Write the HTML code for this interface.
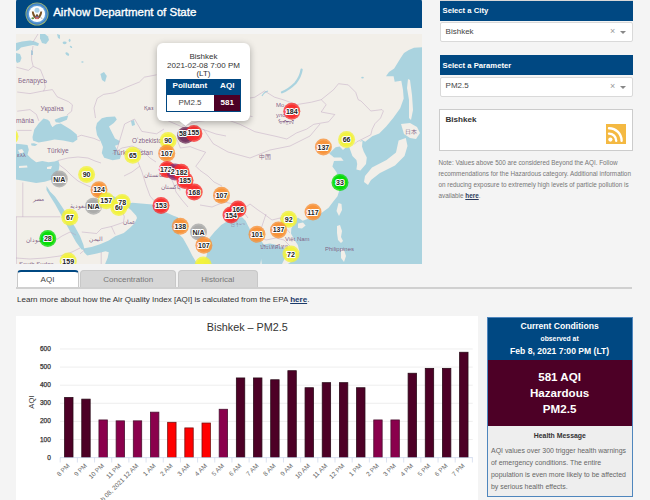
<!DOCTYPE html>
<html><head><meta charset="utf-8">
<style>
*{margin:0;padding:0;box-sizing:border-box}
html,body{width:650px;height:500px;overflow:hidden;background:#f4f4f4;font-family:"Liberation Sans",sans-serif;color:#333}
.abs{position:absolute}
.t{position:absolute;line-height:0;white-space:nowrap}
.p{position:absolute}
.mt{font-size:7px;font-weight:bold;text-anchor:middle;fill:#222;stroke:#fff;stroke-width:2.2px;paint-order:stroke;stroke-linejoin:round}
.sel{left:439.5px;width:193px;height:20px;background:#fff;border:1px solid #d9d9d9;border-radius:2px}
.tab{top:270px;height:18px;border:1px solid #c8c8c8;border-bottom:none;border-radius:4px 4px 0 0;background:#d6d6d6}
.yl{font-size:6.5px;fill:#333;stroke:#333;stroke-width:0.25px}
.xl{font-size:6.4px;fill:#666}
</style></head><body>
<div class="abs" style="left:16px;top:-1.5px;width:406px;height:29.5px;background:#004882;border-radius:3px 3px 0 0"></div>
<svg class="abs" style="left:24.8px;top:2px" width="24" height="24" viewBox="0 0 24 24">
  <circle cx="12" cy="12" r="11.5" fill="#a4b96e"/>
  <circle cx="12" cy="12" r="10.7" fill="#3f7fc4"/>
  <circle cx="12" cy="12" r="9.6" fill="#5a9ad6"/>
  <circle cx="12" cy="12" r="8.1" fill="#fdfdfd"/>
  <circle cx="12" cy="8.2" r="2.5" fill="#a9d0ea"/>
  <path d="M6.8,9.6 C7.2,13 8.2,15.6 11,17.2 L11.6,15.2 C10,13.6 9,11.6 8.6,9.6Z" fill="#7a5226"/>
  <path d="M17.2,9.6 C16.8,13 15.8,15.6 13,17.2 L12.4,15.2 C14,13.6 15,11.6 15.4,9.6Z" fill="#7a5226"/>
  <circle cx="12" cy="13.3" r="1.1" fill="#6b4a22"/>
  <path d="M10.4,14.3 h3.2 v2.2 q-1.6,1.6 -3.2,0z" fill="#d9676d"/>
  <rect x="10.4" y="14.3" width="3.2" height="0.9" fill="#3a5591"/>
  <ellipse cx="7.8" cy="16.2" rx="1.4" ry="1.0" fill="#5f9048"/>
  <path d="M15.4,15.2 l2,1.6" stroke="#8a8a7a" stroke-width="0.7"/>
 </svg>
<div class="t" style="left:53.20px;top:11.52px;font-size:11.5px;font-weight:normal;color:#fff;-webkit-text-stroke:0.35px #fff">AirNow Department of State</div>
<div class="abs" style="left:16px;top:34px;width:406px;height:230px;overflow:hidden;background:#f2efe9">
 <svg width="406" height="230" viewBox="16 34 406 230" style="position:absolute;left:0;top:0;font-family:'Liberation Sans',sans-serif">
<polygon fill="#aad3df" points="16.0,43.0 22.0,41.5 30.0,40.5 35.0,41.5 39.0,43.5 38.0,46.0 33.0,45.0 28.0,46.0 21.0,47.5 18.5,50.0 16.0,51.0"/>
<polygon fill="#aad3df" points="16.0,53.0 20.0,54.0 21.5,58.0 20.0,62.0 17.0,63.0 16.0,61.0"/>
<polygon fill="#aad3df" points="40.0,34.0 45.0,34.0 48.0,36.5 49.0,40.0 46.0,44.0 42.0,43.0 40.0,38.5"/>
<polygon fill="#aad3df" points="57.0,34.0 60.0,35.0 60.0,39.0 58.0,38.0"/>
<polygon fill="#aad3df" points="31.0,50.0 33.0,51.0 33.0,55.0 31.0,55.0"/>
<polygon fill="#aad3df" points="100.4,74.0 104.0,72.0 106.8,76.0 105.0,82.0 102.0,80.0"/>
<ellipse cx="64.6" cy="42.8" rx="2" ry="1.4" fill="#aad3df"/>
<ellipse cx="67.3" cy="54" rx="2.2" ry="1.3" transform="rotate(40 67.3 54)" fill="#aad3df"/>
<ellipse cx="69.6" cy="40.3" rx="0.9" ry="1.6" fill="#aad3df"/>
<ellipse cx="71" cy="46.8" rx="1.4" ry="0.8" transform="rotate(40 71 46.8)" fill="#aad3df"/>
<ellipse cx="82.4" cy="62" rx="1.2" ry="0.8" fill="#aad3df"/>
<polygon fill="#aad3df" points="32.5,136.9 34.3,129.5 38.6,123.4 43.5,118.5 47.8,119.7 50.9,122.8 52.2,127.0 55.8,124.6 60.8,123.4 64.5,125.8 70.6,129.5 76.8,134.5 77.4,139.4 73.0,142.5 63.2,140.6 54.6,139.4 46.0,141.2 38.6,142.5 33.0,140.6"/>
<polygon fill="#aad3df" points="54.6,119.7 60.8,117.2 68.2,115.4 66.9,119.7 59.5,122.8 55.8,122.2"/>
<polygon fill="#aad3df" points="31.0,143.5 34.0,143.2 37.5,144.5 35.0,146.0 31.5,145.5"/>
<polygon fill="#aad3df" points="106.6,117.0 115.0,116.4 116.8,119.4 113.8,123.0 109.0,126.6 110.2,129.0 112.6,133.8 115.0,138.6 119.8,141.0 118.6,144.6 115.0,145.8 117.4,150.6 121.0,155.4 119.8,159.0 112.6,160.2 104.2,157.8 101.8,153.0 103.0,147.0 100.6,141.0 97.0,135.0 95.8,127.8 97.0,123.0 101.8,118.2"/>
<polygon fill="#aad3df" points="131.0,121.0 134.0,120.0 135.0,125.0 132.0,126.0"/>
<polygon fill="#aad3df" points="16.0,143.7 21.4,144.3 27.5,144.9 28.8,149.8 27.5,154.8 31.2,158.5 36.2,162.2 42.3,160.9 48.5,162.2 54.6,161.5 58.3,160.3 59.5,164.6 58.9,169.5 55.8,175.7 52.2,179.4 44.8,181.8 36.2,183.1 26.3,181.2 16.0,179.4"/>
<polygon fill="#aad3df" points="46.5,186.0 48.5,189.0 50.0,191.5 55.0,196.5 61.5,206.0 68.5,217.0 75.0,227.0 80.0,236.0 83.5,245.0 84.5,250.0 81.5,249.5 76.0,242.0 71.0,233.0 65.5,223.0 60.0,213.0 55.0,204.0 50.0,196.0 46.5,190.0"/>
<polygon fill="#aad3df" points="93.0,188.0 99.0,190.0 107.0,193.0 115.0,197.0 122.0,200.0 127.0,203.0 125.0,207.0 118.0,205.5 110.0,203.0 102.0,200.0 96.0,194.0"/>
<polygon fill="#aad3df" points="83.0,248.5 91.5,247.0 100.0,244.2 108.8,240.5 115.2,236.2 123.8,233.0 130.3,227.5 134.6,223.2 137.0,218.0 136.2,215.8 131.0,210.0 126.0,206.0 128.0,203.5 132.4,202.8 141.0,203.6 152.4,204.4 162.0,211.0 168.6,213.4 173.5,215.8 178.3,217.4 177.5,223.9 179.0,234.3 183.0,238.3 188.2,247.6 192.2,255.5 196.1,262.0 198.0,266.0 104.5,266.0 105.5,263.0 107.7,257.7 108.8,252.3 105.5,251.2 96.9,253.4 87.2,255.5 84.0,252.3"/>
<polygon fill="#aad3df" points="203.0,266.0 204.0,262.0 206.7,255.5 209.3,238.3 214.6,231.7 221.2,225.0 227.8,221.0 233.0,218.5 239.7,217.2 242.4,217.6 245.6,220.8 247.8,225.2 250.0,229.5 253.0,231.6 259.6,238.0 264.0,245.0 264.8,249.8 263.2,254.7 261.0,260.0 260.0,266.0"/>
<polygon fill="#aad3df" points="264.0,244.5 270.0,243.6 276.7,244.9 283.3,247.5 287.0,252.0 285.0,258.0 281.0,266.0 262.0,266.0 261.0,258.0"/>
<polygon fill="#aad3df" points="284.9,266.0 289.7,262.8 296.2,257.9 299.4,251.4 297.8,245.0 294.6,240.1 291.0,233.6 291.3,228.8 294.6,222.3 297.8,217.4 302.7,220.7 307.6,219.0 315.7,217.4 322.1,212.6 328.6,207.7 333.5,201.2 337.5,196.3 340.0,188.2 339.0,180.0 338.0,176.0 336.4,172.0 332.4,166.4 334.0,161.0 343.6,160.8 341.0,157.6 334.0,157.6 329.2,153.6 335.6,147.2 339.6,146.4 343.0,150.0 345.2,148.0 348.4,147.2 352.4,146.0 358.0,143.0 362.0,140.0 365.2,141.8 372.2,136.2 379.2,133.4 386.2,126.4 393.2,118.0 400.2,108.2 403.7,98.4 403.0,90.0 401.3,80.7 394.7,81.8 393.6,76.3 386.0,76.3 389.0,72.0 394.2,68.4 400.8,57.8 404.0,53.0 408.8,49.9 414.0,47.8 422.0,47.2 422.0,266.0"/>
<polygon fill="#f2efe9" points="349.0,146.5 352.4,156.0 356.4,160.0 357.2,164.0 356.4,169.6 360.4,170.4 366.0,164.0 366.8,157.6 363.6,151.2 362.0,146.4 362.5,141.0 356.0,142.5 350.0,144.0"/>
<polygon fill="#f2efe9" points="398.6,140.6 405.8,138.0 407.5,146.0 404.5,156.0 395.0,165.5 380.0,173.0 371.0,180.0 368.0,185.0 364.0,182.0 365.0,176.0 372.0,167.5 386.5,160.0 396.0,152.6"/>
<polygon fill="#f2efe9" points="401.0,124.0 410.0,123.0 417.0,127.0 420.0,133.0 416.0,139.0 410.0,138.0 404.0,134.0"/>
<polygon fill="#f2efe9" points="408.0,79.0 410.0,80.0 412.0,95.0 413.0,110.0 411.0,120.0 409.0,118.0 409.0,100.0 407.0,88.0"/>
<polygon fill="#f2efe9" points="338.5,203.0 341.5,204.0 342.0,210.0 339.0,216.0 336.5,211.0"/>
<polygon fill="#f2efe9" points="298.0,223.5 303.0,222.5 305.6,225.5 302.0,228.5 298.0,228.0"/>
<polygon fill="#f2efe9" points="337.0,226.0 340.0,225.0 342.0,231.0 341.0,237.0 343.0,241.0 341.0,243.0 338.0,240.0 337.0,233.0"/>
<polygon fill="#f2efe9" points="341.0,249.0 344.0,250.0 346.0,256.0 344.0,262.0 341.0,258.0"/>
<polygon fill="#f2efe9" points="19.0,166.0 27.0,165.5 27.5,167.5 19.0,168.0"/>
<polygon fill="#f2efe9" points="47.0,167.0 52.0,166.0 51.0,169.0 47.0,169.0"/>
<polygon fill="#f2efe9" points="50.0,122.0 54.0,121.0 56.0,124.0 52.5,127.0 50.5,124.0"/>
<polygon fill="#f2efe9" points="18.0,150.0 22.0,149.0 24.0,152.0 20.0,154.0"/>
<path d="M301.6,69.7 Q300.5,77 295.5,83 Q289,89.5 282,92.3" stroke="#aad3df" stroke-width="2.3" fill="none" stroke-linecap="round"/>
<ellipse cx="362.5" cy="77.6" rx="1.3" ry="0.9" fill="#aad3df"/>
<path d="M262,96 Q264,92 268,91" stroke="#aad3df" stroke-width="1.2" fill="none"/>
<polyline fill="none" stroke="#b89bbb" stroke-width="0.7" stroke-opacity="0.6" points="38.0,34.0 33.0,42.0"/>
<polyline fill="none" stroke="#b89bbb" stroke-width="0.7" stroke-opacity="0.6" points="33.0,46.0 31.6,55.0 31.6,60.0 33.2,66.4"/>
<polyline fill="none" stroke="#b89bbb" stroke-width="0.7" stroke-opacity="0.6" points="16.4,67.2 28.4,70.4 33.2,66.4 40.4,69.6 43.6,77.6 45.2,87.2 43.6,91.2"/>
<polyline fill="none" stroke="#b89bbb" stroke-width="0.7" stroke-opacity="0.6" points="17.2,92.0 30.0,93.6 42.0,91.2 52.4,89.6 57.2,96.8 68.4,101.6 72.4,104.8 71.6,111.2 66.8,115.2"/>
<polyline fill="none" stroke="#b89bbb" stroke-width="0.7" stroke-opacity="0.6" points="17.2,111.2 30.0,109.6 36.4,114.4 38.8,120.8"/>
<polyline fill="none" stroke="#b89bbb" stroke-width="0.7" stroke-opacity="0.6" points="17.2,130.4 31.6,130.4"/>
<polyline fill="none" stroke="#b89bbb" stroke-width="0.7" stroke-opacity="0.6" points="94.0,108.0 97.2,98.4 103.6,94.4 114.0,92.8 127.0,87.0 139.4,82.0 144.3,77.2 156.6,74.8"/>
<polyline fill="none" stroke="#b89bbb" stroke-width="0.7" stroke-opacity="0.6" points="94.0,108.0 95.5,118.0"/>
<polyline fill="none" stroke="#b89bbb" stroke-width="0.7" stroke-opacity="0.6" points="77.0,137.0 81.2,135.2 94.0,138.4 100.0,141.0"/>
<polyline fill="none" stroke="#b89bbb" stroke-width="0.7" stroke-opacity="0.6" points="58.0,160.5 68.0,158.0 78.0,157.0 88.0,158.0 95.0,161.0 101.0,163.0"/>
<polyline fill="none" stroke="#b89bbb" stroke-width="0.7" stroke-opacity="0.6" points="59.5,165.0 66.0,170.0 72.0,176.0 78.0,181.0 86.0,185.0 93.0,188.0"/>
<polyline fill="none" stroke="#b89bbb" stroke-width="0.7" stroke-opacity="0.6" points="22.8,182.5 22.8,216.8"/>
<polyline fill="none" stroke="#b89bbb" stroke-width="0.7" stroke-opacity="0.6" points="16.0,216.8 40.0,216.8 60.4,216.8"/>
<polyline fill="none" stroke="#b89bbb" stroke-width="0.7" stroke-opacity="0.6" points="16.3,216.8 16.3,266.0"/>
<polyline fill="none" stroke="#b89bbb" stroke-width="0.7" stroke-opacity="0.6" points="16.0,258.0 30.0,259.0 45.0,258.0 60.0,256.0 72.0,252.0 80.0,248.0"/>
<polyline fill="none" stroke="#b89bbb" stroke-width="0.7" stroke-opacity="0.6" points="50.0,246.0 56.0,240.0 62.0,236.0 70.0,232.0 76.0,235.0"/>
<polyline fill="none" stroke="#b89bbb" stroke-width="0.7" stroke-opacity="0.6" points="81.8,232.0 96.6,233.5 101.2,228.8 111.4,226.5 123.4,222.4 124.3,216.8 122.0,210.0"/>
<polyline fill="none" stroke="#b89bbb" stroke-width="0.7" stroke-opacity="0.6" points="111.4,226.5 115.1,234.4"/>
<polyline fill="none" stroke="#b89bbb" stroke-width="0.7" stroke-opacity="0.6" points="101.2,252.0 101.2,266.0"/>
<polyline fill="none" stroke="#b89bbb" stroke-width="0.7" stroke-opacity="0.6" points="80.0,253.8 84.6,250.0"/>
<polyline fill="none" stroke="#b89bbb" stroke-width="0.7" stroke-opacity="0.6" points="116.5,151.0 124.6,124.0 134.5,119.0 141.8,131.4 156.6,133.8 164.0,129.0"/>
<polyline fill="none" stroke="#b89bbb" stroke-width="0.7" stroke-opacity="0.6" points="164.0,119.0 181.2,126.5 198.5,121.5 215.7,119.0 237.8,114.0 252.6,116.6"/>
<polyline fill="none" stroke="#b89bbb" stroke-width="0.7" stroke-opacity="0.6" points="112.0,154.0 122.0,148.0 132.0,146.0 142.0,150.0 150.0,158.0 156.0,162.0"/>
<polyline fill="none" stroke="#b89bbb" stroke-width="0.7" stroke-opacity="0.6" points="138.0,162.0 142.0,172.0 146.0,185.0 150.0,196.0 156.0,203.0"/>
<polyline fill="none" stroke="#b89bbb" stroke-width="0.7" stroke-opacity="0.6" points="124.0,176.0 132.0,172.0 140.0,166.0"/>
<polyline fill="none" stroke="#b89bbb" stroke-width="0.7" stroke-opacity="0.6" points="170.0,175.0 174.0,185.0 176.0,192.0 182.0,200.0 188.0,207.0"/>
<polyline fill="none" stroke="#b89bbb" stroke-width="0.7" stroke-opacity="0.6" points="174.8,135.4 178.0,142.0 180.4,148.0 190.2,146.6 197.2,149.4 205.6,152.2 200.0,160.6 195.8,166.2 200.0,170.4 208.0,176.0 214.0,182.0 222.0,186.0"/>
<polyline fill="none" stroke="#b89bbb" stroke-width="0.7" stroke-opacity="0.6" points="200.0,128.4 208.0,131.2 216.0,134.0 226.0,136.0"/>
<polyline fill="none" stroke="#b89bbb" stroke-width="0.7" stroke-opacity="0.6" points="203.4,129.0 213.2,143.7 228.0,152.0 250.0,158.0 270.0,150.0 290.0,146.0 310.0,136.0 320.0,124.0"/>
<polyline fill="none" stroke="#b89bbb" stroke-width="0.7" stroke-opacity="0.6" points="225.0,112.0 240.0,99.7 254.8,97.2 264.6,91.0 274.5,97.2 283.0,99.7 296.6,104.6 311.4,102.2 321.2,99.7 326.2,104.6 321.2,112.0 334.8,114.5 328.6,121.8 313.8,124.3 306.5,129.2 296.6,132.9 286.8,139.0 277.0,136.6 254.8,131.7 240.0,124.3 228.0,120.0"/>
<polyline fill="none" stroke="#b89bbb" stroke-width="0.7" stroke-opacity="0.6" points="321.2,99.7 333.5,89.8 338.5,83.7 348.3,84.9 355.7,92.3 358.2,99.7 361.0,101.0 370.8,111.0 382.0,109.6 383.4,111.0 380.6,118.0 375.0,123.6 372.2,129.2 370.8,134.8 362.4,139.0 356.8,141.8 354.0,144.6"/>
<polyline fill="none" stroke="#b89bbb" stroke-width="0.7" stroke-opacity="0.6" points="200.0,205.0 212.0,207.0 224.0,202.0 234.0,204.0 242.0,210.0 248.0,218.0"/>
<polyline fill="none" stroke="#b89bbb" stroke-width="0.7" stroke-opacity="0.6" points="242.0,210.0 250.0,204.0 258.0,210.0 264.0,214.0 272.0,220.0 280.0,218.0 290.0,216.0"/>
<polyline fill="none" stroke="#b89bbb" stroke-width="0.7" stroke-opacity="0.6" points="258.0,236.0 266.0,240.0 276.0,238.0 284.0,240.0 290.0,246.0"/>
<polyline fill="none" stroke="#b89bbb" stroke-width="0.7" stroke-opacity="0.6" points="266.0,214.0 262.0,226.0 258.0,236.0"/>
<polyline fill="none" stroke="#b89bbb" stroke-width="0.7" stroke-opacity="0.6" points="280.0,218.0 284.0,226.0 290.0,233.0"/>
<text x="18" y="83" font-size="6.6" fill="#7d5a82" fill-opacity="0.95">Беларусь</text>
<text x="40.5" y="111" font-size="6.6" fill="#7d5a82" fill-opacity="0.95">Україна</text>
<text x="16" y="122.5" font-size="6.6" fill="#7d5a82" fill-opacity="0.95">mânia</text>
<text x="47" y="153" font-size="6.6" fill="#7d5a82" fill-opacity="0.95">Türkiye</text>
<text x="17" y="156.5" font-size="6" fill="#7d5a82" fill-opacity="0.95">ελλ</text>
<text x="132" y="143" font-size="6.4" fill="#7d5a82" fill-opacity="0.95">Oʻzbekiston</text>
<text x="113" y="154.5" font-size="6.6" fill="#7d5a82" fill-opacity="0.95">Türkmenistan</text>
<text x="144" y="109.5" font-size="6" fill="#7d5a82" fill-opacity="0.95">Қаз</text>
<text x="144" y="177" font-size="5.5" fill="#7d5a82" fill-opacity="0.95">افغانستان</text>
<text x="161" y="188.5" font-size="5.5" fill="#7d5a82" fill-opacity="0.95">پاکستان</text>
<text x="32.5" y="201" font-size="5.8" fill="#7d5a82" fill-opacity="0.95">مصر</text>
<text x="70" y="208" font-size="5.8" fill="#7d5a82" fill-opacity="0.95">السعودية</text>
<text x="89" y="241" font-size="6" fill="#7d5a82" fill-opacity="0.95">اليمن</text>
<text x="123" y="224" font-size="6" fill="#7d5a82" fill-opacity="0.95">عمان</text>
<text x="26" y="241.5" font-size="5.8" fill="#7d5a82" fill-opacity="0.95">السودان</text>
<text x="19" y="265.5" font-size="6" fill="#7d5a82" fill-opacity="0.95">South Sudan</text>
<text x="276" y="107" font-size="6" fill="#7d5a82" fill-opacity="0.95">Mo</text>
<text x="276" y="117" font-size="6" fill="#7d5a82" fill-opacity="0.95">улс</text>
<text x="278" y="124" font-size="4.5" fill="#7d5a82" fill-opacity="0.95">ᠮᠣᠩᠭᠣᠯ</text>
<text x="259" y="159" font-size="6" fill="#7d5a82" fill-opacity="0.95">中国</text>
<text x="285" y="240.5" font-size="6" fill="#7d5a82" fill-opacity="0.95">Việt Nam</text>
<text x="260" y="249" font-size="5.5" fill="#7d5a82" fill-opacity="0.95">ประเทศไทย</text>
<text x="325" y="251" font-size="6" fill="#7d5a82" fill-opacity="0.95">Philippines</text>
<text x="405" y="134" font-size="6" fill="#7d5a82" fill-opacity="0.95">日本</text>
<text x="231" y="225" font-size="5" fill="#7d5a82" fill-opacity="0.95">မြန်မာ</text>
<circle cx="10" cy="136.5" r="8.5" fill="#f2f23a" fill-opacity="0.78"/><circle cx="10" cy="136.5" r="6.8" fill="#f2f23a" fill-opacity="0.85"/>
<circle cx="185.6" cy="135.3" r="8.5" fill="#6e2f5c" fill-opacity="0.78"/><circle cx="185.6" cy="135.3" r="6.8" fill="#6e2f5c" fill-opacity="0.85"/>
<circle cx="193.9" cy="133.4" r="8.5" fill="#f82a2a" fill-opacity="0.78"/><circle cx="193.9" cy="133.4" r="6.8" fill="#f82a2a" fill-opacity="0.85"/>
<circle cx="168.1" cy="140.5" r="8.5" fill="#f2f23a" fill-opacity="0.78"/><circle cx="168.1" cy="140.5" r="6.8" fill="#f2f23a" fill-opacity="0.85"/>
<circle cx="166.7" cy="153.2" r="8.5" fill="#f89035" fill-opacity="0.78"/><circle cx="166.7" cy="153.2" r="6.8" fill="#f89035" fill-opacity="0.85"/>
<circle cx="132.8" cy="155.2" r="8.5" fill="#f2f23a" fill-opacity="0.78"/><circle cx="132.8" cy="155.2" r="6.8" fill="#f2f23a" fill-opacity="0.85"/>
<circle cx="167.2" cy="169.4" r="8.5" fill="#f82a2a" fill-opacity="0.78"/><circle cx="167.2" cy="169.4" r="6.8" fill="#f82a2a" fill-opacity="0.85"/>
<circle cx="175" cy="172" r="8.5" fill="#8a2e6c" fill-opacity="0.78"/><circle cx="175" cy="172" r="6.8" fill="#8a2e6c" fill-opacity="0.85"/>
<circle cx="181.2" cy="172.2" r="8.5" fill="#f82a2a" fill-opacity="0.78"/><circle cx="181.2" cy="172.2" r="6.8" fill="#f82a2a" fill-opacity="0.85"/>
<circle cx="185" cy="180.6" r="8.5" fill="#f82a2a" fill-opacity="0.78"/><circle cx="185" cy="180.6" r="6.8" fill="#f82a2a" fill-opacity="0.85"/>
<circle cx="194.2" cy="192" r="8.5" fill="#f82a2a" fill-opacity="0.78"/><circle cx="194.2" cy="192" r="6.8" fill="#f82a2a" fill-opacity="0.85"/>
<circle cx="59.3" cy="179.1" r="8.5" fill="#a8a8a8" fill-opacity="0.78"/><circle cx="59.3" cy="179.1" r="6.8" fill="#a8a8a8" fill-opacity="0.85"/>
<circle cx="86.6" cy="174.5" r="8.5" fill="#f2f23a" fill-opacity="0.78"/><circle cx="86.6" cy="174.5" r="6.8" fill="#f2f23a" fill-opacity="0.85"/>
<circle cx="99" cy="189.7" r="8.5" fill="#f89035" fill-opacity="0.78"/><circle cx="99" cy="189.7" r="6.8" fill="#f89035" fill-opacity="0.85"/>
<circle cx="93.5" cy="206.2" r="8.5" fill="#a8a8a8" fill-opacity="0.78"/><circle cx="93.5" cy="206.2" r="6.8" fill="#a8a8a8" fill-opacity="0.85"/>
<circle cx="106.2" cy="200.7" r="8.5" fill="#f2f23a" fill-opacity="0.78"/><circle cx="106.2" cy="200.7" r="6.8" fill="#f2f23a" fill-opacity="0.85"/>
<circle cx="118.8" cy="207.5" r="8.5" fill="#f2f23a" fill-opacity="0.78"/><circle cx="118.8" cy="207.5" r="6.8" fill="#f2f23a" fill-opacity="0.85"/>
<circle cx="122.2" cy="202.4" r="8.5" fill="#f2f23a" fill-opacity="0.78"/><circle cx="122.2" cy="202.4" r="6.8" fill="#f2f23a" fill-opacity="0.85"/>
<circle cx="69.8" cy="217.2" r="8.5" fill="#f2f23a" fill-opacity="0.78"/><circle cx="69.8" cy="217.2" r="6.8" fill="#f2f23a" fill-opacity="0.85"/>
<circle cx="47.8" cy="238.5" r="8.5" fill="#00dc00" fill-opacity="0.78"/><circle cx="47.8" cy="238.5" r="6.8" fill="#00dc00" fill-opacity="0.85"/>
<circle cx="68.2" cy="261" r="8.5" fill="#f2f23a" fill-opacity="0.78"/><circle cx="68.2" cy="261" r="6.8" fill="#f2f23a" fill-opacity="0.85"/>
<circle cx="161" cy="205.5" r="8.5" fill="#f82a2a" fill-opacity="0.78"/><circle cx="161" cy="205.5" r="6.8" fill="#f82a2a" fill-opacity="0.85"/>
<circle cx="180.3" cy="226.3" r="8.5" fill="#f89035" fill-opacity="0.78"/><circle cx="180.3" cy="226.3" r="6.8" fill="#f89035" fill-opacity="0.85"/>
<circle cx="198.5" cy="232" r="8.5" fill="#a8a8a8" fill-opacity="0.78"/><circle cx="198.5" cy="232" r="6.8" fill="#a8a8a8" fill-opacity="0.85"/>
<circle cx="203.9" cy="245.3" r="8.5" fill="#f89035" fill-opacity="0.78"/><circle cx="203.9" cy="245.3" r="6.8" fill="#f89035" fill-opacity="0.85"/>
<circle cx="203.2" cy="265" r="8.5" fill="#f2f23a" fill-opacity="0.78"/><circle cx="203.2" cy="265" r="6.8" fill="#f2f23a" fill-opacity="0.85"/>
<circle cx="221.5" cy="195.3" r="8.5" fill="#f89035" fill-opacity="0.78"/><circle cx="221.5" cy="195.3" r="6.8" fill="#f89035" fill-opacity="0.85"/>
<circle cx="231" cy="215" r="8.5" fill="#f82a2a" fill-opacity="0.78"/><circle cx="231" cy="215" r="6.8" fill="#f82a2a" fill-opacity="0.85"/>
<circle cx="238" cy="209" r="8.5" fill="#f82a2a" fill-opacity="0.78"/><circle cx="238" cy="209" r="6.8" fill="#f82a2a" fill-opacity="0.85"/>
<circle cx="291.8" cy="111.3" r="8.5" fill="#f82a2a" fill-opacity="0.78"/><circle cx="291.8" cy="111.3" r="6.8" fill="#f82a2a" fill-opacity="0.85"/>
<circle cx="323.4" cy="147" r="8.5" fill="#f89035" fill-opacity="0.78"/><circle cx="323.4" cy="147" r="6.8" fill="#f89035" fill-opacity="0.85"/>
<circle cx="346.6" cy="139.4" r="8.5" fill="#f2f23a" fill-opacity="0.78"/><circle cx="346.6" cy="139.4" r="6.8" fill="#f2f23a" fill-opacity="0.85"/>
<circle cx="340" cy="182.4" r="8.5" fill="#00dc00" fill-opacity="0.78"/><circle cx="340" cy="182.4" r="6.8" fill="#00dc00" fill-opacity="0.85"/>
<circle cx="313" cy="212" r="8.5" fill="#f89035" fill-opacity="0.78"/><circle cx="313" cy="212" r="6.8" fill="#f89035" fill-opacity="0.85"/>
<circle cx="288.7" cy="219.3" r="8.5" fill="#f2f23a" fill-opacity="0.78"/><circle cx="288.7" cy="219.3" r="6.8" fill="#f2f23a" fill-opacity="0.85"/>
<circle cx="278.5" cy="229.9" r="8.5" fill="#f89035" fill-opacity="0.78"/><circle cx="278.5" cy="229.9" r="6.8" fill="#f89035" fill-opacity="0.85"/>
<circle cx="257" cy="234.2" r="8.5" fill="#f89035" fill-opacity="0.78"/><circle cx="257" cy="234.2" r="6.8" fill="#f89035" fill-opacity="0.85"/>
<circle cx="291" cy="254" r="8.5" fill="#f2f23a" fill-opacity="0.78"/><circle cx="291" cy="254" r="6.8" fill="#f2f23a" fill-opacity="0.85"/>
<text x="182.8" y="135.8" class="mt">58</text>
<text x="193.4" y="135.2" class="mt">155</text>
<text x="168.1" y="143.0" class="mt">90</text>
<text x="166.7" y="155.7" class="mt">107</text>
<text x="132.8" y="157.7" class="mt">65</text>
<text x="165.8" y="172.2" class="mt">172</text>
<text x="172.6" y="173.8" class="mt">2</text>
<text x="181.6" y="174.6" class="mt">182</text>
<text x="185" y="183.1" class="mt">185</text>
<text x="194.2" y="194.5" class="mt">168</text>
<text x="59.3" y="181.6" class="mt">N/A</text>
<text x="86.6" y="177.0" class="mt">90</text>
<text x="99" y="192.2" class="mt">124</text>
<text x="93.5" y="208.7" class="mt">N/A</text>
<text x="106.2" y="203.2" class="mt">157</text>
<text x="118.8" y="210.0" class="mt">60</text>
<text x="122.2" y="204.9" class="mt">78</text>
<text x="69.8" y="219.7" class="mt">67</text>
<text x="47.8" y="241.0" class="mt">28</text>
<text x="68.2" y="263.5" class="mt">159</text>
<text x="161" y="208.0" class="mt">153</text>
<text x="180.3" y="228.8" class="mt">138</text>
<text x="198.5" y="234.5" class="mt">N/A</text>
<text x="203.9" y="247.8" class="mt">107</text>
<text x="221.5" y="197.8" class="mt">107</text>
<text x="231" y="217.5" class="mt">154</text>
<text x="238" y="211.5" class="mt">166</text>
<text x="291.8" y="113.8" class="mt">184</text>
<text x="323.4" y="149.5" class="mt">137</text>
<text x="346.6" y="141.9" class="mt">66</text>
<text x="340" y="184.9" class="mt">33</text>
<text x="313" y="214.5" class="mt">117</text>
<text x="288.7" y="221.8" class="mt">92</text>
<text x="278.5" y="232.4" class="mt">137</text>
<text x="257" y="236.7" class="mt">101</text>
<text x="291" y="256.5" class="mt">72</text>
 </svg></div>
<div class="abs" style="left:157px;top:43.2px;width:93px;height:77.8px;background:#fff;border-radius:6px;box-shadow:0 2px 7px rgba(0,0,0,0.3)"></div>
<svg class="abs" style="left:170px;top:115px" width="30" height="14" viewBox="170 115 30 14"><polygon points="178.5,120.5 192.5,120.5 185.5,126" fill="#fff" stroke="rgba(0,0,0,0.12)" stroke-width="0.6"/><rect x="172" y="115" width="26" height="5.9" fill="#fff"/></svg>
<div class="t" style="left:53.50px;width:300px;text-align:center;top:56.93px;font-size:8px;font-weight:normal;color:#333;">Bishkek</div>
<div class="t" style="left:53.50px;width:300px;text-align:center;top:65.63px;font-size:8px;font-weight:normal;color:#333;">2021-02-08 7:00 PM</div>
<div class="t" style="left:53.50px;width:300px;text-align:center;top:74.03px;font-size:8px;font-weight:normal;color:#333;">(LT)</div>
<div class="abs" style="left:166px;top:78.5px;width:75px;height:33.5px;border:1px solid #004882;background:#fff"></div>
<div class="abs" style="left:166px;top:78.5px;width:75px;height:16.2px;background:#004882"></div>
<div class="abs" style="left:213.8px;top:94.7px;width:26.2px;height:16.3px;background:#4d0026"></div>
<div class="t" style="left:39.80px;width:300px;text-align:center;top:86.19px;font-size:8.1px;font-weight:bold;color:#fff;">Pollutant</div>
<div class="t" style="left:77.30px;width:300px;text-align:center;top:86.19px;font-size:8.1px;font-weight:bold;color:#fff;">AQI</div>
<div class="t" style="left:40.00px;width:300px;text-align:center;top:103.23px;font-size:8px;font-weight:normal;color:#444;">PM2.5</div>
<div class="t" style="left:77.30px;width:300px;text-align:center;top:103.23px;font-size:8px;font-weight:bold;color:#fff;">581</div>
<div class="abs" style="left:439.5px;top:0px;width:193px;height:1px;background:#d8d8d8"></div>
<div class="abs" style="left:439.5px;top:1px;width:193px;height:20px;background:#004882"></div>
<div class="t" style="left:442.50px;top:10.63px;font-size:7.7px;font-weight:bold;color:#fff;">Select a City</div>
<div class="abs sel" style="top:22px"></div>
<div class="t" style="left:445.60px;top:31.53px;font-size:8px;font-weight:normal;color:#444;">Bishkek</div>
<div class="abs" style="left:439.5px;top:55px;width:193px;height:20px;background:#004882"></div>
<div class="t" style="left:442.50px;top:65.63px;font-size:7.7px;font-weight:bold;color:#fff;">Select a Parameter</div>
<div class="abs sel" style="top:77px"></div>
<div class="t" style="left:445.60px;top:86.33px;font-size:8px;font-weight:normal;color:#444;">PM2.5</div>
<div class="t" style="left:462.60px;width:300px;text-align:center;top:30.88px;font-size:9px;font-weight:normal;color:#999;">×</div>
<div class="abs" style="left:620px;top:30.5px;width:0;height:0;border-left:3px solid transparent;border-right:3px solid transparent;border-top:3px solid #888"></div>
<div class="t" style="left:462.60px;width:300px;text-align:center;top:85.88px;font-size:9px;font-weight:normal;color:#999;">×</div>
<div class="abs" style="left:620px;top:85.5px;width:0;height:0;border-left:3px solid transparent;border-right:3px solid transparent;border-top:3px solid #888"></div>
<div class="abs" style="left:439px;top:109px;width:194px;height:42px;background:#fff;border:1px solid #ccc"></div>
<div class="t" style="left:445.50px;top:119.79px;font-size:8.1px;font-weight:bold;color:#333;">Bishkek</div>
<div class="abs" style="left:606px;top:124.2px;width:20px;height:19.6px;background:#f4b942"><svg width="20" height="20" viewBox="0 0 20 20"><circle cx="4.4" cy="15.6" r="2.1" fill="#fff"/><path d="M3,9.6 A7.2,7.2 0 0 1 10.2,16.8" stroke="#fff" stroke-width="2.4" fill="none" stroke-linecap="round"/><path d="M3,4.2 A12.6,12.6 0 0 1 15.6,16.8" stroke="#fff" stroke-width="2.4" fill="none" stroke-linecap="round"/></svg></div>
<div class="p" style="left:438.50px;top:156.57px;width:196px;font-size:6.35px;line-height:11.25px;color:#777;">Note: Values above 500 are considered Beyond the AQI. Follow recommendations for the Hazardous category. Additional information on reducing exposure to extremely high levels of particle pollution is available <b style="text-decoration:underline;color:#2a3a5a">here</b>.</div>
<div class="abs tab" style="left:16.5px;width:62.5px;background:#fff;border-top:2px solid #004882"></div>
<div class="abs tab" style="left:80.2px;width:95.8px"></div>
<div class="abs tab" style="left:178px;width:80px"></div>
<div class="abs" style="left:16px;top:287px;width:616px;height:2px;background:#d0d0d0"></div>
<div class="t" style="left:-102.50px;width:300px;text-align:center;top:280.23px;font-size:8px;font-weight:normal;color:#444;">AQI</div>
<div class="t" style="left:-21.80px;width:300px;text-align:center;top:279.63px;font-size:8px;font-weight:normal;color:#777;">Concentration</div>
<div class="t" style="left:67.80px;width:300px;text-align:center;top:279.63px;font-size:8px;font-weight:normal;color:#777;">Historical</div>
<div class="t" style="left:17.00px;top:299.61px;font-size:8.05px;font-weight:normal;color:#333;">Learn more about how the Air Quality Index [AQI] is calculated from the EPA <b style="text-decoration:underline;color:#1a3a6a">here</b>.</div>
<div class="abs" style="left:16px;top:316px;width:462px;height:190px;background:#fff">
 <svg width="462" height="190" viewBox="16 316 462 190" style="position:absolute;left:0;top:0;font-family:'Liberation Sans',sans-serif">
  <text x="247.3" y="331" text-anchor="middle" font-size="10.8" fill="#333">Bishkek – PM2.5</text>
  <text transform="translate(34.2,402.1) rotate(-90)" text-anchor="middle" font-size="7.7" fill="#333">AQI</text>
<line x1="60" y1="439.50" x2="472.7" y2="439.50" stroke="#e6e6e6" stroke-width="0.7"/>
<text x="50.8" y="441.50" text-anchor="end" class="yl">100</text>
<line x1="60" y1="421.40" x2="472.7" y2="421.40" stroke="#e6e6e6" stroke-width="0.7"/>
<text x="50.8" y="423.40" text-anchor="end" class="yl">200</text>
<line x1="60" y1="403.30" x2="472.7" y2="403.30" stroke="#e6e6e6" stroke-width="0.7"/>
<text x="50.8" y="405.30" text-anchor="end" class="yl">300</text>
<line x1="60" y1="385.20" x2="472.7" y2="385.20" stroke="#e6e6e6" stroke-width="0.7"/>
<text x="50.8" y="387.20" text-anchor="end" class="yl">400</text>
<line x1="60" y1="367.10" x2="472.7" y2="367.10" stroke="#e6e6e6" stroke-width="0.7"/>
<text x="50.8" y="369.10" text-anchor="end" class="yl">500</text>
<line x1="60" y1="349.00" x2="472.7" y2="349.00" stroke="#e6e6e6" stroke-width="0.7"/>
<text x="50.8" y="351.00" text-anchor="end" class="yl">600</text>
<text x="50.8" y="459.60" text-anchor="end" class="yl">0</text>
<rect x="64.60" y="397.51" width="8.4" height="60.09" fill="#4d0026" stroke="#2a0a18" stroke-width="0.8"/>
<rect x="81.77" y="399.14" width="8.4" height="58.46" fill="#4d0026" stroke="#2a0a18" stroke-width="0.8"/>
<rect x="98.95" y="419.95" width="8.4" height="37.65" fill="#8a004c" stroke="#4a1030" stroke-width="0.8"/>
<rect x="116.12" y="420.86" width="8.4" height="36.74" fill="#8a004c" stroke="#4a1030" stroke-width="0.8"/>
<rect x="133.30" y="420.86" width="8.4" height="36.74" fill="#8a004c" stroke="#4a1030" stroke-width="0.8"/>
<rect x="150.47" y="412.17" width="8.4" height="45.43" fill="#8a004c" stroke="#4a1030" stroke-width="0.8"/>
<rect x="167.65" y="422.31" width="8.4" height="35.30" fill="#ff0000" stroke="#7a1010" stroke-width="0.8"/>
<rect x="184.82" y="427.92" width="8.4" height="29.68" fill="#ff0000" stroke="#7a1010" stroke-width="0.8"/>
<rect x="202.00" y="423.03" width="8.4" height="34.57" fill="#ff0000" stroke="#7a1010" stroke-width="0.8"/>
<rect x="219.18" y="409.27" width="8.4" height="48.33" fill="#8a004c" stroke="#4a1030" stroke-width="0.8"/>
<rect x="236.35" y="377.96" width="8.4" height="79.64" fill="#4d0026" stroke="#2a0a18" stroke-width="0.8"/>
<rect x="253.53" y="377.96" width="8.4" height="79.64" fill="#4d0026" stroke="#2a0a18" stroke-width="0.8"/>
<rect x="270.70" y="379.77" width="8.4" height="77.83" fill="#4d0026" stroke="#2a0a18" stroke-width="0.8"/>
<rect x="287.88" y="370.72" width="8.4" height="86.88" fill="#4d0026" stroke="#2a0a18" stroke-width="0.8"/>
<rect x="305.05" y="387.73" width="8.4" height="69.87" fill="#4d0026" stroke="#2a0a18" stroke-width="0.8"/>
<rect x="322.23" y="382.67" width="8.4" height="74.93" fill="#4d0026" stroke="#2a0a18" stroke-width="0.8"/>
<rect x="339.40" y="382.67" width="8.4" height="74.93" fill="#4d0026" stroke="#2a0a18" stroke-width="0.8"/>
<rect x="356.58" y="387.73" width="8.4" height="69.87" fill="#4d0026" stroke="#2a0a18" stroke-width="0.8"/>
<rect x="373.75" y="419.95" width="8.4" height="37.65" fill="#8a004c" stroke="#4a1030" stroke-width="0.8"/>
<rect x="390.92" y="419.95" width="8.4" height="37.65" fill="#8a004c" stroke="#4a1030" stroke-width="0.8"/>
<rect x="408.10" y="373.25" width="8.4" height="84.35" fill="#4d0026" stroke="#2a0a18" stroke-width="0.8"/>
<rect x="425.27" y="368.37" width="8.4" height="89.23" fill="#4d0026" stroke="#2a0a18" stroke-width="0.8"/>
<rect x="442.45" y="368.37" width="8.4" height="89.23" fill="#4d0026" stroke="#2a0a18" stroke-width="0.8"/>
<rect x="459.62" y="352.26" width="8.4" height="105.34" fill="#4d0026" stroke="#2a0a18" stroke-width="0.8"/>
<line x1="60" y1="457.60" x2="472.7" y2="457.60" stroke="#ccd6eb" stroke-width="0.8"/>
<line x1="60.20" y1="457.60" x2="60.20" y2="462.5" stroke="#ccd6eb" stroke-width="0.7"/>
<line x1="77.38" y1="457.60" x2="77.38" y2="462.5" stroke="#ccd6eb" stroke-width="0.7"/>
<line x1="94.55" y1="457.60" x2="94.55" y2="462.5" stroke="#ccd6eb" stroke-width="0.7"/>
<line x1="111.73" y1="457.60" x2="111.73" y2="462.5" stroke="#ccd6eb" stroke-width="0.7"/>
<line x1="128.90" y1="457.60" x2="128.90" y2="462.5" stroke="#ccd6eb" stroke-width="0.7"/>
<line x1="146.07" y1="457.60" x2="146.07" y2="462.5" stroke="#ccd6eb" stroke-width="0.7"/>
<line x1="163.25" y1="457.60" x2="163.25" y2="462.5" stroke="#ccd6eb" stroke-width="0.7"/>
<line x1="180.43" y1="457.60" x2="180.43" y2="462.5" stroke="#ccd6eb" stroke-width="0.7"/>
<line x1="197.60" y1="457.60" x2="197.60" y2="462.5" stroke="#ccd6eb" stroke-width="0.7"/>
<line x1="214.78" y1="457.60" x2="214.78" y2="462.5" stroke="#ccd6eb" stroke-width="0.7"/>
<line x1="231.95" y1="457.60" x2="231.95" y2="462.5" stroke="#ccd6eb" stroke-width="0.7"/>
<line x1="249.12" y1="457.60" x2="249.12" y2="462.5" stroke="#ccd6eb" stroke-width="0.7"/>
<line x1="266.30" y1="457.60" x2="266.30" y2="462.5" stroke="#ccd6eb" stroke-width="0.7"/>
<line x1="283.48" y1="457.60" x2="283.48" y2="462.5" stroke="#ccd6eb" stroke-width="0.7"/>
<line x1="300.65" y1="457.60" x2="300.65" y2="462.5" stroke="#ccd6eb" stroke-width="0.7"/>
<line x1="317.82" y1="457.60" x2="317.82" y2="462.5" stroke="#ccd6eb" stroke-width="0.7"/>
<line x1="335.00" y1="457.60" x2="335.00" y2="462.5" stroke="#ccd6eb" stroke-width="0.7"/>
<line x1="352.18" y1="457.60" x2="352.18" y2="462.5" stroke="#ccd6eb" stroke-width="0.7"/>
<line x1="369.35" y1="457.60" x2="369.35" y2="462.5" stroke="#ccd6eb" stroke-width="0.7"/>
<line x1="386.52" y1="457.60" x2="386.52" y2="462.5" stroke="#ccd6eb" stroke-width="0.7"/>
<line x1="403.70" y1="457.60" x2="403.70" y2="462.5" stroke="#ccd6eb" stroke-width="0.7"/>
<line x1="420.88" y1="457.60" x2="420.88" y2="462.5" stroke="#ccd6eb" stroke-width="0.7"/>
<line x1="438.05" y1="457.60" x2="438.05" y2="462.5" stroke="#ccd6eb" stroke-width="0.7"/>
<line x1="455.23" y1="457.60" x2="455.23" y2="462.5" stroke="#ccd6eb" stroke-width="0.7"/>
<line x1="472.40" y1="457.60" x2="472.40" y2="462.5" stroke="#ccd6eb" stroke-width="0.7"/>
<text transform="translate(70.05,466.3) rotate(-45)" text-anchor="end" class="xl">8 PM</text>
<text transform="translate(87.22,466.3) rotate(-45)" text-anchor="end" class="xl">9 PM</text>
<text transform="translate(104.40,466.3) rotate(-45)" text-anchor="end" class="xl">10 PM</text>
<text transform="translate(121.58,466.3) rotate(-45)" text-anchor="end" class="xl">11 PM</text>
<text transform="translate(138.75,466.3) rotate(-45)" text-anchor="end" class="xl">Feb 08, 2021 12 AM</text>
<text transform="translate(155.93,466.3) rotate(-45)" text-anchor="end" class="xl">1 AM</text>
<text transform="translate(173.10,466.3) rotate(-45)" text-anchor="end" class="xl">2 AM</text>
<text transform="translate(190.28,466.3) rotate(-45)" text-anchor="end" class="xl">3 AM</text>
<text transform="translate(207.45,466.3) rotate(-45)" text-anchor="end" class="xl">4 AM</text>
<text transform="translate(224.63,466.3) rotate(-45)" text-anchor="end" class="xl">5 AM</text>
<text transform="translate(241.80,466.3) rotate(-45)" text-anchor="end" class="xl">6 AM</text>
<text transform="translate(258.98,466.3) rotate(-45)" text-anchor="end" class="xl">7 AM</text>
<text transform="translate(276.15,466.3) rotate(-45)" text-anchor="end" class="xl">8 AM</text>
<text transform="translate(293.32,466.3) rotate(-45)" text-anchor="end" class="xl">9 AM</text>
<text transform="translate(310.50,466.3) rotate(-45)" text-anchor="end" class="xl">10 AM</text>
<text transform="translate(327.68,466.3) rotate(-45)" text-anchor="end" class="xl">11 AM</text>
<text transform="translate(344.85,466.3) rotate(-45)" text-anchor="end" class="xl">12 PM</text>
<text transform="translate(362.03,466.3) rotate(-45)" text-anchor="end" class="xl">1 PM</text>
<text transform="translate(379.20,466.3) rotate(-45)" text-anchor="end" class="xl">2 PM</text>
<text transform="translate(396.38,466.3) rotate(-45)" text-anchor="end" class="xl">3 PM</text>
<text transform="translate(413.55,466.3) rotate(-45)" text-anchor="end" class="xl">4 PM</text>
<text transform="translate(430.73,466.3) rotate(-45)" text-anchor="end" class="xl">5 PM</text>
<text transform="translate(447.90,466.3) rotate(-45)" text-anchor="end" class="xl">6 PM</text>
<text transform="translate(465.08,466.3) rotate(-45)" text-anchor="end" class="xl">7 PM</text>
 </svg></div>
<div class="abs" style="left:487.4px;top:317px;width:145.3px;height:180.3px;border:1px solid #4f86bd;background:#eeeeee"></div>
<div class="abs" style="left:488.4px;top:318px;width:143.3px;height:41.5px;background:#004882"></div>
<div class="abs" style="left:488.4px;top:359.5px;width:143.3px;height:66.8px;background:#4d0026"></div>
<div class="t" style="left:409.60px;width:300px;text-align:center;top:326.22px;font-size:8.6px;font-weight:bold;color:#fff;">Current Conditions</div>
<div class="t" style="left:409.60px;width:300px;text-align:center;top:338.84px;font-size:6.8px;font-weight:bold;color:#fff;">observed at</div>
<div class="t" style="left:409.60px;width:300px;text-align:center;top:350.52px;font-size:8.6px;font-weight:bold;color:#fff;">Feb 8, 2021 7:00 PM (LT)</div>
<div class="t" style="left:409.60px;width:300px;text-align:center;top:376.98px;font-size:11.6px;font-weight:bold;color:#fff;">581 AQI</div>
<div class="t" style="left:409.60px;width:300px;text-align:center;top:393.18px;font-size:11.6px;font-weight:bold;color:#fff;">Hazardous</div>
<div class="t" style="left:409.60px;width:300px;text-align:center;top:409.48px;font-size:11.6px;font-weight:bold;color:#fff;">PM2.5</div>
<div class="t" style="left:409.80px;width:300px;text-align:center;top:436.11px;font-size:6.9px;font-weight:bold;color:#333;">Health Message</div>
<div class="p" style="left:491.00px;top:445.16px;width:140px;font-size:6.95px;line-height:11.87px;color:#666;">AQI values over 300 trigger health warnings of emergency conditions. The entire population is even more likely to be affected by serious health effects.</div>
</body></html>
